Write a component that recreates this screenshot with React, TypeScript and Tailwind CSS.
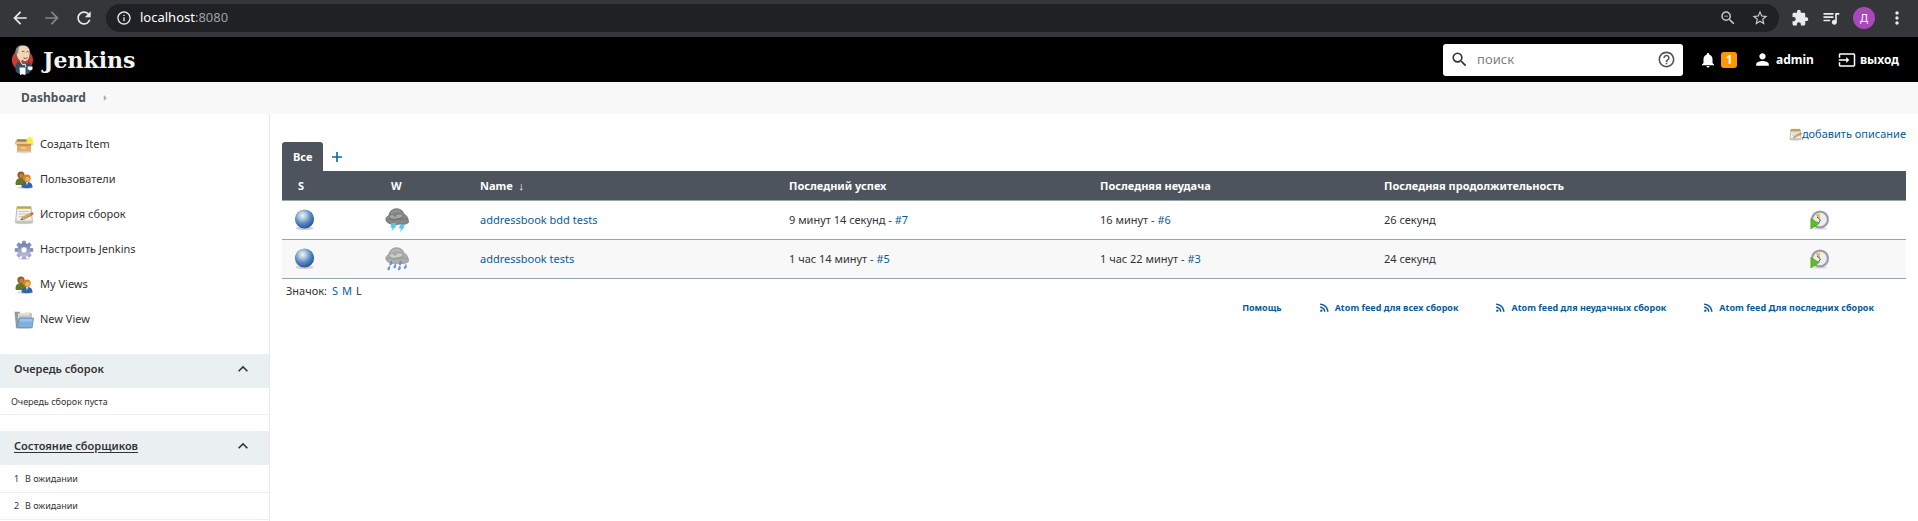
import React from "react";
import {
  MdArrowBack, MdArrowForward, MdRefresh, MdInfoOutline, MdZoomOut, MdStarBorder, MdExtension,
  MdQueueMusic, MdMoreVert, MdSearch, MdHelpOutline, MdNotifications, MdPerson, MdInput,
  MdKeyboardArrowUp, MdRssFeed, MdArrowRight,
} from "react-icons/md";

const link = "text-[#0b5c96] hover:underline";

function Butler() {
  return (
    <svg viewBox="0 0 24 32" className="h-8 w-6" aria-hidden="true">
      <circle cx="11.5" cy="16" r="10.6" fill="#d33833" />
      <path d="M5 28c-1-4-1-9 3-11l9 0c4 2 4 6 4 9l-4 4H8z" fill="#335061" />
      <path d="M5 9C5 3.500 8 1.200 12 1.200c4.500 0 7 3 7 7.500 0 5-1.500 9-5.500 9.500C9 18.500 5.500 15 5 9z" fill="#f0d6b7" stroke="#3b2f28" strokeWidth=".6" />
      <path d="M4.700 11C3.600 6 5.500 2 9.500 1.200 7.500 3.500 7.300 6 7 9z" fill="#8b8680" />
      <path d="M11 7.800q1.500-1 2.500 0M15.500 7.800q1.300-.8 2 .2M12.500 14q2 1.200 4-.3" stroke="#4a3428" strokeWidth=".8" fill="none" />
      <path d="M11 16l3 1.700 3.500-1.500v4l-3.500-1.300-3 1.300z" fill="#d33833" stroke="#81332f" strokeWidth=".5" />
      <path d="M9 17l3 4 2-1 1 3" stroke="#f7f7f7" strokeWidth="1" fill="none" />
      <path d="M8.500 23.500h6v7.500l-3-.8-2.500.8z" fill="#fff" />
      <path d="M17 22.500h4.500v3l-2.500 1-2.500-1.500z" fill="#f4f4f4" />
    </svg>
  );
}

function BoxIcon() {
  return (
    <svg viewBox="0 0 20 20" className="size-5" aria-hidden="true">
      <ellipse cx="10" cy="17" rx="8" ry="1.500" fill="#ddd" />
      <path d="M3 4h13l3 4H1z" fill="#c79c63" />
      <path d="M4 5h11l1 3H3z" fill="#9a7443" />
      <path d="M.5 8.500L3 6.500h14l2.500 3-2 1H2.500z" fill="#ecc68d" />
      <path d="M3 9h14v7.500H3z" fill="#dfae6a" />
      <path d="M3 9h14v2H3z" fill="#c99450" />
      <path d="M7 12.500h5v1H7z" fill="#f5dcb3" />
      <circle cx="16" cy="5" r="3.600" fill="#fff36b" opacity=".8" />
      <circle cx="16" cy="5" r="1.900" fill="#ffee1f" />
    </svg>
  );
}

function PeopleIcon() {
  return (
    <svg viewBox="0 0 20 20" className="size-5" aria-hidden="true">
      <ellipse cx="11" cy="17.500" rx="8" ry="1.500" fill="#ddd" />
      <path d="M1.500 14c0-4 2-6 5.500-6s5 2 5 6l-1 1H2z" fill="#64772a" />
      <circle cx="7" cy="5" r="3.600" fill="#8f5f25" />
      <circle cx="7.500" cy="5.800" r="2.200" fill="#b98242" />
      <path d="M7.500 17.500c0-4 2-5.500 5.500-5.500s5.500 1.500 5.500 5.500q-5.500 1.500-11 0z" fill="#3465a4" />
      <path d="M11.800 11.500h2.400l-1.200 4z" fill="#e8eef7" />
      <circle cx="13" cy="8.300" r="3.700" fill="#d98222" />
      <circle cx="13.500" cy="9" r="2.300" fill="#f1b15d" />
    </svg>
  );
}

function NotepadIcon({ small = false }: { small?: boolean }) {
  return (
    <svg viewBox="0 0 20 20" className={small ? "size-[13px]" : "size-5"} aria-hidden="true">
      <ellipse cx="10" cy="18" rx="9" ry="1.200" fill="#ccc" />
      <path d="M3 2h14l1.500 15.500h-17z" fill="#efefed" stroke={small ? "#8d8c86" : "#aaa9a4"} strokeWidth=".8" />
      <path d={small ? "M3 1.500h14l.4 4H2.600z" : "M3 1.500h14l.2 2.200H2.800z"} fill="#bfa93e" />
      <path d="M5 6.500h10M5 9h9M5 11.500h4" stroke="#c3c3c0" strokeWidth=".9" />
      <path d="M2 15.500h16.300l.2 2H1.500z" fill="#c9c9c6" />
      <path d="M7 14.500l1.500-2.300 8-4 1.300 2.200-8.300 4z" fill="#dca64e" stroke="#9a6c2b" strokeWidth=".5" />
      <path d="M16 8.300l2-1c1.200-.2 2 1.300 1.200 2l-1.800 1.200z" fill="#dc6257" />
      <path d="M6.500 15l1.300-1.600.8 1z" fill="#333" />
    </svg>
  );
}

const teeth = [0, 45, 90, 135, 180, 225, 270, 315];

function GearIcon() {
  return (
    <svg viewBox="0 0 20 20" className="size-5" aria-hidden="true">
      <defs>
        <linearGradient id="gear" x1="0" y1="0" x2="0" y2="1">
          <stop offset="0" stopColor="#7486b0" />
          <stop offset="1" stopColor="#b8b9d8" />
        </linearGradient>
      </defs>
      <ellipse cx="10" cy="18.800" rx="6" ry="1" fill="#ddd" />
      {teeth.map((a) => (
        <path key={a} d="M8.300.8h3.400l.6 4H7.700z" fill={a > 90 && a < 270 ? "#a5a8cd" : "#8492bb"} transform={`rotate(${a} 10 10)`} />
      ))}
      <circle cx="10" cy="10" r="4.900" fill="none" stroke="url(#gear)" strokeWidth="3.600" />
      <circle cx="10" cy="10" r="3" fill="#fff" stroke="#8c96be" strokeWidth=".6" />
    </svg>
  );
}

function FolderIcon() {
  return (
    <svg viewBox="0 0 20 20" className="size-5" aria-hidden="true">
      <ellipse cx="10" cy="17.800" rx="9" ry="1.200" fill="#ccc" />
      <path d="M.5 1.800h5l1 1.500h11v14H2z" fill="#999b98" />
      <path d="M4 3.500l12-1.500 1 7H4z" fill="#dededc" />
      <path d="M5 5.500h13v5H5z" fill="#c3c5c4" />
      <path d="M5.300 8h14.200l-1.300 9.500H2.800z" fill="#7fb0dd" stroke="#5689bd" strokeWidth=".7" />
      <path d="M6 9h12.500l-.3 2.500H5.500z" fill="#9dc4e8" />
    </svg>
  );
}

function BallIcon() {
  return (
    <svg viewBox="0 0 24 24" className="size-6" role="img" aria-label="Success">
      <defs>
        <radialGradient id="ball" cx=".4" cy=".32" r=".68">
          <stop offset="0" stopColor="#f4f6e4" />
          <stop offset=".25" stopColor="#b9cfe2" />
          <stop offset=".6" stopColor="#5a8cc4" />
          <stop offset="1" stopColor="#2a5596" />
        </radialGradient>
      </defs>
      <ellipse cx="12.500" cy="20.300" rx="9" ry="1.800" fill="#d3d1cf" />
      <circle cx="12.500" cy="11" r="9.600" fill="url(#ball)" />
    </svg>
  );
}

function CloudIcon({ storm = false }: { storm?: boolean }) {
  const base = storm ? "#858789" : "#adaeac";
  const light = storm ? "#a3a5a7" : "#cccdca";
  const edge = storm ? "#66686a" : "#8d8f8c";
  return (
    <svg viewBox="0 0 24 24" className="size-6" role="img" aria-label={storm ? "Storm" : "Rain"}>
      <g stroke={edge} strokeWidth=".7">
        <path d="M2.500 14.500C-.5 12 1 8 3.800 8 4 3.500 7.500.8 11.500.8c4 0 7 2.200 7.500 5.700 3 .5 4.500 4 4.500 8-3 2.500-6 2-8.500 1.500-4 1-9 1-12.500-1.500z" fill={base} />
        <path d="M4 8.500c2-3.500 5.500-1.500 6 .2 1.200-3.500 6.500-4 8.500-.7-2.500 1.500-4 3-8 3.200C7.500 11.500 5 11 4 8.500z" fill={light} />
        <path d="M6.500 5.500c1-3 7-4 9-.5" fill="none" stroke={light} />
        <path d="M1.500 12.500c2.500-2 5-1.500 7 0 2-2 5-1.800 6.500-.3 2-2 5-1.700 8 0" fill="none" />
      </g>
      {storm ? (
        <path d="M6.500 15l4.500 0-1 2.500h2L6.500 23l1-3.500h-2zM15 16.500h4.500l-1 2h1.500L15 24l1-3.500h-2z" fill="#55c7f5" />
      ) : (
        <g fill="#7ba4df" stroke="#4877b8" strokeWidth=".6">
          <path d="M6.500 14q-3 4-1 4t1-4zM10.500 17q-3 4-1 4t1-4zM16 14q-3 4-1 4t1-4zM4.500 19q-3 4-1 4t1-4zM15 19q-3 4-1 4t1-4zM21 17.500q-3 4-1 4t1-4z" />
        </g>
      )}
    </svg>
  );
}

function ScheduleIcon() {
  return (
    <svg viewBox="0 0 20 20" className="size-5" aria-hidden="true">
      <ellipse cx="10" cy="18.500" rx="7" ry="1" fill="#d8d8d8" />
      <circle cx="10" cy="9.500" r="7.900" fill="#eeeef0" stroke="#9c9dae" strokeWidth="2.300" />
      <path d="M10 9.500L5.500 5.300A6 6 0 0 1 9.800 3.500z" fill="#e2c04a" />
      <path d="M7 7l3.500 3-2 3" stroke="#555" strokeWidth="1" fill="none" />
      <path d="M.8 8.500l8.500 5-8.500 5.500z" fill="#5cbf22" stroke="#3b9313" strokeWidth=".5" />
    </svg>
  );
}

const tasks = [
  { label: "Создать Item", icon: <BoxIcon /> },
  { label: "Пользователи", icon: <PeopleIcon /> },
  { label: "История сборок", icon: <NotepadIcon /> },
  { label: "Настроить Jenkins", icon: <GearIcon /> },
  { label: "My Views", icon: <PeopleIcon /> },
  { label: "New View", icon: <FolderIcon /> },
];

const jobs = [
  { name: "addressbook bdd tests", storm: true, ok: "9 минут 14 секунд", okNo: "#7", fail: "16 минут", failNo: "#6", time: "26 секунд" },
  { name: "addressbook tests", storm: false, ok: "1 час 14 минут", okNo: "#5", fail: "1 час 22 минут", failNo: "#3", time: "24 секунд" },
];

const feeds = ["Atom feed для всех сборок", "Atom feed для неудачных сборок", "Atom feed Для последних сборок"];

function BrowserBar() {
  return (
    <div className="flex h-[37px] items-center bg-[#35363a] pb-px text-[#e8eaed]">
      <div className="flex w-[106px] shrink-0 items-center gap-3 pl-[10px]">
        <button aria-label="Back"><MdArrowBack size={20} /></button>
        <button aria-label="Forward" className="text-[#86878a]"><MdArrowForward size={20} /></button>
        <button aria-label="Reload"><MdRefresh size={20} /></button>
      </div>
      <div className="flex h-7 flex-1 items-center rounded-full bg-[#202124] pr-[10px] pl-[10px]">
        <MdInfoOutline size={16} />
        <input aria-label="Address" className="sr-only" defaultValue="localhost:8080" />
        <span className="flex-1 pl-2 text-[13px] text-white">localhost<span className="text-[#9aa0a6]">:8080</span></span>
        <div className="flex items-center gap-[14px] text-[#c6c8cb]">
          <button aria-label="Zoom"><MdZoomOut size={18} /></button>
          <button aria-label="Bookmark"><MdStarBorder size={18} /></button>
        </div>
      </div>
      <div className="flex items-center gap-3 pr-[11px] pl-3">
        <button aria-label="Extensions"><MdExtension size={18} /></button>
        <button aria-label="Media"><MdQueueMusic size={20} /></button>
        <button aria-label="Profile" className="size-[22px] shrink-0 rounded-full bg-[#ab47bc] text-[11px] leading-[22px] text-white">Д</button>
        <button aria-label="Menu"><MdMoreVert size={20} /></button>
      </div>
    </div>
  );
}

function Header() {
  return (
    <header className="flex h-[45px] items-center bg-black pr-[19px] pl-[11px] text-xs font-bold text-white">
      <a href="#" className="flex items-center gap-2">
        <Butler />
        <span className="font-['DejaVu_Serif',serif] text-[22px] leading-8 text-[#f4f4f4]">Jenkins</span>
      </a>
      <form className="ml-auto flex h-8 w-60 items-center rounded-[3px] bg-white px-[7px] font-normal">
        <MdSearch size={19} className="text-[#333]" />
        <input aria-label="поиск" placeholder="поиск" className="w-0 flex-1 pl-2 text-[13px] text-[#333] outline-none placeholder:text-[#80807a]" />
        <MdHelpOutline size={19} className="text-[#4d545d]" />
      </form>
      <a href="#" className="ml-4 flex items-center gap-1">
        <MdNotifications size={18} />
        <span className="h-4 w-4 rounded-[3px] bg-[#ff9800] text-center leading-4">1</span>
      </a>
      <a href="#" className="ml-4 flex items-center gap-1"><MdPerson size={19} />admin</a>
      <a href="#" className="ml-6 flex items-center gap-1"><MdInput size={18} />выход</a>
    </header>
  );
}

function PaneHeader({ title, underlined = false }: { title: string; underlined?: boolean }) {
  return (
    <div className="flex h-[34px] items-center justify-between bg-[#eaeff2] pr-4 pb-1 pl-[14px] text-[11px] font-semibold">
      {underlined ? <a href="#" className="underline underline-offset-2">{title}</a> : <h2>{title}</h2>}
      <button aria-label="Collapse"><MdKeyboardArrowUp size={20} /></button>
    </div>
  );
}

function Sidebar() {
  return (
    <aside className="w-[270px] shrink-0 border-r border-[#eaeaea] text-[#333]">
      <nav className="flex flex-col px-[14px] pt-[13px] pb-[17px] text-[11px]">
        {tasks.map((t) => (
          <a key={t.label} href="#" className="flex h-[35px] items-center gap-[6px]">{t.icon}{t.label}</a>
        ))}
      </nav>
      <section className="mb-4">
        <PaneHeader title="Очередь сборок" />
        <p className="h-[27px] border-b border-[#eaeff2] pl-[11px] text-[9px] leading-[27px]">Очередь сборок пуста</p>
      </section>
      <section>
        <PaneHeader title="Состояние сборщиков" underlined />
        <table className="w-full text-[9px]">
          <tbody>
            {[1, 2].map((n) => (
              <tr key={n} className="h-[27px] border-b border-[#eaeff2]">
                <td className="w-[25px] pl-[14px]">{n}</td>
                <td>В ожидании</td>
              </tr>
            ))}
          </tbody>
        </table>
      </section>
    </aside>
  );
}

export default function App() {
  return (
    <div className="min-h-screen bg-white font-['Noto_Sans',sans-serif]">
      <BrowserBar />
      <Header />
      <nav className="flex h-8 items-center bg-[#f8f8f8] pl-[21px] text-xs font-bold text-[#4d545d]">
        <a href="#">Dashboard</a>
        <MdArrowRight size={14} className="ml-3 text-[#aaa]" />
      </nav>
      <div className="flex min-h-[407px]">
        <Sidebar />
        <main className="min-w-0 flex-1 px-3 pt-[13px] text-[11px] text-[#333]">
          <div className="flex h-[15px] items-center justify-end">
            <a href="#" className={`flex items-center ${link}`}><NotepadIcon small />добавить описание</a>
          </div>
          <div className="flex h-[29px] items-stretch">
            <a href="#" className="rounded-t-[3px] bg-[#4d545d] px-[11px] leading-[29px] font-bold text-white">Все</a>
            <a href="#" aria-label="New View" className="flex items-center pl-[9px] text-[#0b6aa2]">
              <svg viewBox="0 0 10 10" className="size-[10px]" aria-hidden="true">
                <path d="M5 0v10M0 5h10" stroke="currentColor" strokeWidth="1.600" />
              </svg>
            </a>
          </div>
          <table className="w-full table-fixed text-left">
            <thead>
              <tr className="h-[29px] border-b border-[#98a6ad] bg-[#4d545d] text-white *:pt-[2px]">
                <th className="w-[87px] pl-4">S</th>
                <th className="w-[95px] pl-[22px]">W</th>
                <th className="w-[309px] pl-4">Name &nbsp;↓</th>
                <th className="w-[311px] pl-4">Последний успех</th>
                <th className="w-[284px] pl-4">Последняя неудача</th>
                <th className="w-[426px] pl-4">Последняя продолжительность</th>
                <th className="w-[112px]" />
              </tr>
            </thead>
            <tbody>
              {jobs.map((j) => (
                <tr key={j.name} className="h-[39px] border-b border-[#98a6ad] even:bg-[#f8f8f8]">
                  <td className="pl-[10px]"><BallIcon /></td>
                  <td className="pl-4"><CloudIcon storm={j.storm} /></td>
                  <td className="pt-[2px] pl-4"><a href="#" className={link}>{j.name}</a></td>
                  <td className="pt-[2px] pl-4">{j.ok} - <a href="#" className={link}>{j.okNo}</a></td>
                  <td className="pt-[2px] pl-4">{j.fail} - <a href="#" className={link}>{j.failNo}</a></td>
                  <td className="pt-[2px] pl-4">{j.time}</td>
                  <td className="pl-4"><button aria-label="Build" className="block"><ScheduleIcon /></button></td>
                </tr>
              ))}
            </tbody>
          </table>
          <div className="mt-[5px] flex h-4 items-center gap-1 pl-1">
            <span className="pr-px">Значок:</span>
            <a href="#" className={link}>S</a>
            <a href="#" className={link}>M</a>
            <span>L</span>
          </div>
          <div className="flex h-4 items-center justify-end gap-9 pr-8 text-[9px] font-bold">
            <a href="#" className={link}>Помощь</a>
            {feeds.map((f) => (
              <a key={f} href="#" className={`flex items-center gap-1 ${link}`}><MdRssFeed size={13} />{f}</a>
            ))}
          </div>
        </main>
      </div>
    </div>
  );
}
